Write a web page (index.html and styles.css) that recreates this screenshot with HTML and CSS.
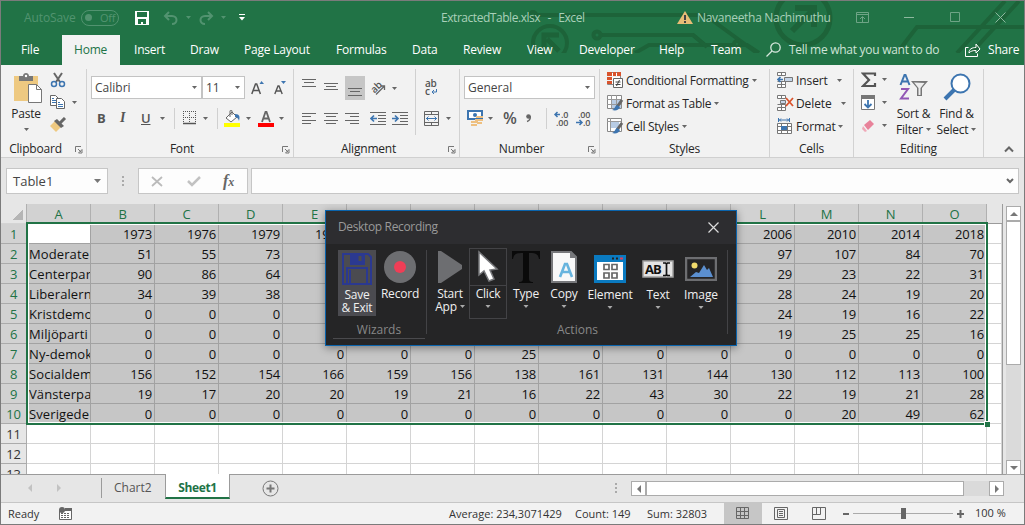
FILE: index.html
```html
<!DOCTYPE html>
<html lang="en">
<head>
<meta charset="utf-8">
<title>ExtractedTable.xlsx - Excel</title>
<link rel="stylesheet" href="styles.css">
</head>
<body>
<svg class="defs" width="0" height="0">
  <symbol id="caret" viewBox="0 0 5 3"><path d="M0 0h5L2.5 3z" fill="currentColor"/></symbol>
  <symbol id="launch" viewBox="0 0 8 8"><path d="M.5 6V.5H6M3 3l3 3M7 3.5V7H3.500z" fill="none" stroke="#777"/></symbol>
</svg>
<div class="window">
  <header class="top">
    <svg class="circuit" viewBox="0 0 1023 52" width="1023" height="52" fill="none" stroke="#1d6339" stroke-width="4">
      <circle cx="532" cy="14" r="3"/><path d="M535 14H704l52 38M600 34H692l12 10h28M634 52l14-8h56M740 44h6l12 8"/>
      <circle cx="596" cy="34" r="3.500"/><circle cx="736" cy="43" r="3"/><circle cx="549" cy="42" r="17"/>
      <path d="M558 50l-12-12M543 52V34h15" stroke-width="5"/>
      <circle cx="802" cy="17" r="27" stroke-width="5"/><path d="M791 30l20-20M794 7h19v19" stroke-width="6"/>
      <path d="M682 34h10l14 12M896 52l20-26h107M956 52l48-52M970 52l48-52"/>
    </svg>
    <div class="titlebar">
      <span class="autosave">AutoSave</span>
      <span class="toggle"><i></i>Off</span>
      <svg class="i-save" width="14" height="14"><path fill="#fff" fill-rule="evenodd" d="M0 0h14v14H0zM2 1h10v5H2zM3 8h8v5H8v-2H6v2H3z"/></svg>
      <svg width="16" height="14" fill="none" stroke="#529370" stroke-width="2"><path d="M6 1L2 5l4 4M2 5h7c6 0 6 8 0 8"/></svg>
      <svg class="caret dim" width="5" height="3"><use href="#caret"/></svg>
      <svg width="16" height="14" fill="none" stroke="#529370" stroke-width="2"><path d="M9 1l4 4-4 4M13 5H6c-6 0-6 8 0 8"/></svg>
      <svg class="caret dim" width="5" height="3"><use href="#caret"/></svg>
      <svg width="6" height="7"><path d="M0 .5h6" stroke="#fff"/><path d="M0 3h6L3 6.500z" fill="#fff"/></svg>
      <span class="doc">ExtractedTable.xlsx &nbsp;-&nbsp; Excel</span>
      <svg width="16" height="13"><path d="M8 0l8 13H0z" fill="#e8bd76"/><path d="M8 4v5M8 10v2" stroke="#444" stroke-width="2"/></svg>
      <span class="user">Navaneetha Nachimuthu</span>
      <svg width="13" height="11" fill="none" stroke="#6ea486"><path d="M.5.5h12v10H.5zM.5 2.500h12M6.500 10V5M4 7l2.500-2.500L9 7"/></svg>
      <svg width="10" height="11"><path d="M0 5.500h10" stroke="#8db89e"/></svg>
      <svg width="10" height="11"><path d="M.5.5h9v9h-9z" fill="none" stroke="#6ea486"/></svg>
      <svg width="11" height="11"><path d="M.5.5l10 10M10.500.5l-10 10" stroke="#8db89e"/></svg>
    </div>
    <nav class="tabs">
      <span class="file">File</span><span class="home">Home</span><span>Insert</span><span>Draw</span><span>Page Layout</span><span>Formulas</span><span>Data</span><span>Review</span><span>View</span><span>Developer</span><span>Help</span><span>Team</span>
      <svg width="16" height="16" fill="none" stroke="#d7e8de" stroke-width="1.300"><circle cx="9.500" cy="5.500" r="4.700"/><path d="M6 9L.5 14.500"/></svg>
      <span class="tell">Tell me what you want to do</span>
      <svg width="16" height="15" fill="none" stroke="#fff"><path d="M3.500 4.500h-3v9h12v-3M4 10c0-4 3-5.500 7-5.500V1l4 5-4 4V7.500C8 7.500 5.500 8 4 10z"/></svg>
      <span class="share">Share</span>
    </nav>
  </header>

  <section class="ribbon">
    <div class="group clipboard">
      <div class="body">
        <div class="paste">
          <svg width="28" height="30"><path d="M0 3h24v25H0z" fill="#eec981"/><path d="M5 8V3h4c0-4 6-4 6 0h4v5z" fill="#777"/><circle cx="12" cy="3" r="1.200" fill="#fff"/><path d="M14.500 11.500h8l5 5v13h-13z" fill="#fff" stroke="#777"/><path d="M22.500 11.500v5h5" fill="none" stroke="#777"/></svg>
          <span>Paste</span>
          <svg class="caret" width="5" height="3"><use href="#caret"/></svg>
        </div>
        <div class="clip-tools">
          <svg width="16" height="16" fill="none"><path d="M4 1l6 9M12 1l-6 9" stroke="#666" stroke-width="2"/><circle cx="4" cy="12" r="2.500" stroke="#3d75b0" stroke-width="1.500"/><circle cx="12" cy="12" r="2.500" stroke="#3d75b0" stroke-width="1.500"/></svg><i></i>
          <svg width="16" height="14"><g fill="#fff" stroke="#666"><path d="M.5.5h5l3 3v7h-8z"/><path d="M6.500 3.500h5l3 3v7h-8z"/></g><path d="M2 3.500h2M2 5.500h4M2 7.500h4M8 7.500h2M8 9.500h5M8 11.500h5" stroke="#3d75b0"/></svg>
          <svg class="caret" width="5" height="3"><use href="#caret"/></svg>
          <svg width="17" height="15"><path d="M5 4l6 6-5 5-6-6z" fill="#eec981"/><path d="M4 4l3-2 7 7-3 2z" fill="#666"/><path d="M10 6l5-5" stroke="#666" stroke-width="3"/></svg>
        </div>
      </div>
      <div class="label"><span>Clipboard</span><svg width="8" height="8"><use href="#launch"/></svg></div>
    </div>

    <div class="group font">
      <div class="body">
        <div class="row1">
          <span class="select">Calibri<svg class="caret" width="5" height="3"><use href="#caret"/></svg></span>
          <span class="select">11<svg class="caret" width="5" height="3"><use href="#caret"/></svg></span>
          <svg width="14" height="15"><path d="M.8 14L4.500 4h1.200l3.700 10M2 10.500h6" fill="none" stroke="#555" stroke-width="1.500"/><path d="M8.500 4L10.500 1l2.500 3z" fill="#3d75b0"/></svg>
          <svg width="13" height="15"><path d="M.8 14L4 6h1l3.200 8M2 11h5" fill="none" stroke="#555" stroke-width="1.400"/><path d="M7 1h5L9.500 4z" fill="#3d75b0"/></svg>
        </div>
        <div class="row2">
          <b>B</b><em>I</em><u>U</u><svg class="caret" width="5" height="3"><use href="#caret"/></svg><i class="sep"></i>
          <svg width="14" height="14" fill="none" stroke="#555"><path d="M0 .5h13M.5 0v12M6.500 0v12M12.500 0v12M0 6.500h13" stroke-dasharray="1 1"/><path d="M0 12.500h13" stroke-width="1.500"/></svg>
          <svg class="caret" width="5" height="3"><use href="#caret"/></svg><i class="sep"></i>
          <svg width="17" height="17"><path d="M0 13h16v4H0z" fill="#ff0"/><path d="M8 2l5 5-6 5-5-4z" fill="#fff" stroke="#666"/><path d="M6 7V1c0-1 2-1 2 0v4" fill="none" stroke="#666"/><path d="M11 4c5 0 5 3 4 7-1-3-2-4-4-4z" fill="#3d75b0"/></svg>
          <svg class="caret" width="5" height="3"><use href="#caret"/></svg>
          <svg width="16" height="17"><path d="M4 12L7.500 2h1L12 12M5 8.500h6" fill="none" stroke="#666" stroke-width="1.800"/><path d="M0 13h16v4H0z" fill="red"/></svg>
          <svg class="caret" width="5" height="3"><use href="#caret"/></svg>
        </div>
      </div>
      <div class="label"><span>Font</span><svg width="8" height="8"><use href="#launch"/></svg></div>
    </div>

    <div class="group align">
      <div class="body">
        <div class="align-grid">
          <svg width="14" height="24" stroke="#666"><path d="M0 3.500h14M2 6.500h10M0 10.500h14"/></svg>
          <svg width="14" height="24" stroke="#666"><path d="M0 7.500h14M2 10.500h10M0 13.500h14"/></svg>
          <span class="pressed"><svg width="14" height="24" stroke="#666"><path d="M0 12.500h14M2 15.500h10M0 19.500h14"/></svg></span>
          <svg width="18" height="16" class="open"><text x="1" y="11" transform="rotate(-45 6 8)" class="g-ab">ab</text><path d="M6 14.500l8-8M10.500 6h4v4" fill="none" stroke="#666" stroke-width="1.300"/></svg>
          <svg class="caret" width="5" height="3"><use href="#caret"/></svg>
          <svg width="14" height="12" stroke="#666"><path d="M0 .5h14M0 3.500h9M0 7.500h14M0 10.500h9"/></svg>
          <svg width="14" height="12" stroke="#666"><path d="M0 .5h14M2 3.500h10M0 7.500h14M2 10.500h10"/></svg>
          <svg width="14" height="12" stroke="#666"><path d="M0 .5h14M5 3.500h9M0 7.500h14M5 10.500h9"/></svg>
          <svg width="16" height="14" fill="none" stroke="#666"><path d="M0 .5h16M8 3.500h8M8 6.500h8M8 9.500h8M0 12.500h16"/><path d="M7 6.500H1M4 3.500l-3 3 3 3" stroke="#3d75b0" stroke-width="1.700"/></svg>
          <svg width="16" height="14" fill="none" stroke="#666"><path d="M0 .5h16M8 3.500h8M8 6.500h8M8 9.500h8M0 12.500h16"/><path d="M0 6.500h6M3 3.500l3 3-3 3" stroke="#3d75b0" stroke-width="1.700"/></svg>
        </div>
        <div class="wrap-tools">
          <svg width="15" height="18" class="open"><text x="1" y="8" class="g-wrap">ab</text><text x="1" y="16" class="g-wrap">c</text><path d="M12.500 10v3H8M10 11l-2 2 2 2" fill="none" stroke="#3d75b0"/></svg><i></i>
          <svg width="16" height="16" fill="none" stroke="#666"><path d="M.5.5h14v14H.5zM.5 3.500h14M.5 11.500h14M7.500 0v4M7.500 11v4"/><path d="M2 7.500h11M4.500 5.500l-2 2 2 2M10.500 5.500l2 2-2 2" stroke="#3d75b0"/></svg>
          <svg class="caret" width="5" height="3"><use href="#caret"/></svg>
        </div>
      </div>
      <div class="label"><span>Alignment</span><svg width="8" height="8"><use href="#launch"/></svg></div>
    </div>

    <div class="group number">
      <div class="body">
        <span class="select">General<svg class="caret" width="5" height="3"><use href="#caret"/></svg></span>
        <div class="row2">
          <svg width="17" height="16"><path d="M1 1h14v8H1z" fill="#fff" stroke="#3d75b0" stroke-width="2"/><circle cx="8" cy="5" r="2" fill="#3d75b0"/><path d="M9 7h7M8 10h8M4 12h7M4 15h6M10 13h5" stroke="#eec081" stroke-width="2.200"/></svg>
          <svg class="caret" width="5" height="3"><use href="#caret"/></svg>
          <span class="pct">%</span><svg width="6" height="9"><circle cx="2.500" cy="2.500" r="2.300" fill="#666"/><path d="M4 2c1 3-1 5-3 5.500" fill="none" stroke="#666" stroke-width="1.500"/></svg><i class="sep"></i>
          <svg width="15" height="15" class="open"><path d="M6 3.500H1M3.500 1L1 3.500 3.500 6" fill="none" stroke="#3d75b0" stroke-width="1.500"/><text x="7" y="7" class="g-dec">.0</text><text x="2" y="14.500" class="g-dec">.00</text></svg>
          <svg width="15" height="15" class="open"><text x="2" y="7" class="g-dec">.00</text><path d="M0 11.500h6M3.500 9L6 11.500 3.500 14" fill="none" stroke="#3d75b0" stroke-width="1.500"/><text x="7" y="14.500" class="g-dec">.0</text></svg>
        </div>
      </div>
      <div class="label"><span>Number</span><svg width="8" height="8"><use href="#launch"/></svg></div>
    </div>

    <div class="group styles">
      <div class="body list">
        <div><svg width="17" height="17"><path d="M.5.5h13v12H.5z" fill="#fff" stroke="#888"/><path d="M0 0h5v12H0zM6 0h3v4H6zM10 0h4v4h-4z" fill="#d9532c"/><path d="M0 4.500h13M0 8.500h6" stroke="#eee"/><path d="M6.500 6.500h9v9h-9z" fill="#fff" stroke="#666"/><path d="M8.500 10h5M8.500 12.500h5M12.500 8l-3 6" stroke="#444"/></svg><span>Conditional Formatting</span><svg class="caret" width="5" height="3"><use href="#caret"/></svg></div>
        <div><svg width="17" height="17"><path d="M.5.5h14v13H.5z" fill="#fff" stroke="#888"/><path d="M5 4h9v9H5z" fill="#b8cce4"/><path d="M0 4.500h14M0 9.500h14M4.500 0v13M9.500 0v13" stroke="#999"/><path d="M15 5l-5 7" stroke="#666" stroke-width="3"/><path d="M10 10l3 2c-1 3-4 4-8 3 3-1 3-4 5-5z" fill="#3d75b0"/></svg><span>Format as Table</span><svg class="caret" width="5" height="3"><use href="#caret"/></svg></div>
        <div><svg width="17" height="17"><path d="M.5.5h14v13H.5z" fill="#fff" stroke="#888"/><path d="M4 4h8v6H4z" fill="#b8cce4"/><path d="M0 3.500h14M3.500 0v13" stroke="#999"/><path d="M15 5l-5 7" stroke="#666" stroke-width="3"/><path d="M10 10l3 2c-1 3-4 4-8 3 3-1 3-4 5-5z" fill="#3d75b0"/></svg><span>Cell Styles</span><svg class="caret" width="5" height="3"><use href="#caret"/></svg></div>
      </div>
      <div class="label"><span>Styles</span></div>
    </div>

    <div class="group cells">
      <div class="body list">
        <div><svg width="17" height="17" fill="#fff" stroke="#777"><path d="M.5.5h8v3h-8zM4.500.5v3M.5 12.500h8v3h-8zM4.500 9.500v6M.5 9.500h8v3"/><path d="M7.500 5.500h8v4h-8z" fill="#c5d5e8"/><path d="M6 7.500H1M3.500 5L1 7.500 3.500 10" stroke="#3d75b0" stroke-width="1.700" fill="none"/></svg><span>Insert</span><svg class="caret" width="5" height="3"><use href="#caret"/></svg></div>
        <div><svg width="17" height="17" fill="#fff" stroke="#777"><path d="M.5.5h8v3h-8zM4.500.5v3M.5 12.500h8v3h-8zM4.500 9.500v6M.5 9.500h8v3"/><path d="M3.500 5.500h5v3h-5z" fill="#c5d5e8"/><path d="M9 3l7 8M16 3l-7 8" stroke="#d9532c" stroke-width="1.800"/></svg><span>Delete</span><svg class="caret" width="5" height="3"><use href="#caret"/></svg></div>
        <div><svg width="17" height="17" fill="none" stroke="#777"><path d="M.5 5.500h14v10H.5zM.5 8.500h14M.5 12.500h14M4.500 5v11M10.500 5v11" fill="#fff"/><path d="M4 8h6v4H4z" fill="#3d75b0" stroke="none"/><path d="M1.500 0v4M12.500 0v4M2 2h10M4 .5L2.500 2 4 3.500M10 .5L11.500 2 10 3.500" stroke="#3d75b0"/></svg><span>Format</span><svg class="caret" width="5" height="3"><use href="#caret"/></svg></div>
      </div>
      <div class="label"><span>Cells</span></div>
    </div>

    <div class="group editing">
      <div class="body">
        <div class="edit-tools">
          <svg width="16" height="16"><path d="M14 4V1.500H2L8 8l-6 6h12v-3" fill="none" stroke="#555" stroke-width="2.200"/></svg><svg class="caret" width="5" height="3"><use href="#caret"/></svg>
          <svg width="15" height="16"><path d="M.5.5h13v14H.5z" fill="#fff" stroke="#777"/><path d="M0 0h14v4H0z" fill="#777"/><path d="M7 5v8M3.500 9L7 12.500 10.500 9" fill="none" stroke="#3d75b0" stroke-width="1.800"/></svg><svg class="caret" width="5" height="3"><use href="#caret"/></svg>
          <svg width="15" height="14"><path d="M3 6l6-5 4 4-6 6z" fill="#e8829a"/><path d="M2 7l4 5-2 1-3-3z" fill="#f0a9b8"/></svg><svg class="caret" width="5" height="3"><use href="#caret"/></svg>
        </div>
        <div class="big">
          <svg width="30" height="29"><path d="M1.500 12L5.500 2h1l4 10M3 8.500h6" fill="none" stroke="#3d75b0" stroke-width="2"/><path d="M2 16h7L2 25.500h8" fill="none" stroke="#9257b5" stroke-width="2"/><path d="M12 8h17l-6 7v8h-5v-8z" fill="#777"/><path d="M15 9.500l4.500 5.500v7h2v-7l4-5" fill="#eee"/></svg>
          <span>Sort &amp;<br>Filter<svg class="caret" width="5" height="3"><use href="#caret"/></svg></span>
        </div>
        <div class="big">
          <svg width="28" height="29"><path d="M12 16L2 26" stroke="#3d75b0" stroke-width="4"/><circle cx="17.500" cy="10.500" r="9" fill="#fff" stroke="#3d75b0" stroke-width="2"/></svg>
          <span>Find &amp;<br>Select<svg class="caret" width="5" height="3"><use href="#caret"/></svg></span>
        </div>
      </div>
      <div class="label"><span>Editing</span></div>
    </div>
    <svg class="collapse" width="10" height="7"><path d="M1 5.500l4-4 4 4" fill="none" stroke="#666" stroke-width="2"/></svg>
  </section>

  <section class="formula">
    <div class="namebox">Table1<svg width="7" height="4"><path d="M0 0h7L3.500 4z" fill="#777"/></svg></div>
    <svg class="dots" width="2" height="11"><path d="M0 0h2v2H0zM0 4h2v2H0zM0 8h2v2H0z" fill="#aaa"/></svg>
    <div class="fx">
      <svg width="12" height="11"><path d="M1 1l10 9M11 1L1 10" stroke="#bbb" stroke-width="1.800"/></svg>
      <svg width="14" height="11"><path d="M1 5l4 4 8-8" fill="none" stroke="#c2c2c2" stroke-width="2.500"/></svg>
      <span>f<small>x</small></span>
    </div>
    <div class="input"><svg width="8" height="6"><path d="M1 1l3 3 3-3" fill="none" stroke="#666" stroke-width="2"/></svg></div>
  </section>

  <section class="sheet">
    <div class="grid" id="grid"></div>
    <div class="vscroll">
      <span class="btn"><svg width="8" height="4"><path d="M0 4h8L4 0z" fill="#777"/></svg></span>
      <span class="vthumb"></span><span class="fill"></span>
      <span class="btn"><svg width="8" height="4"><path d="M0 0h8L4 4z" fill="#777"/></svg></span>
    </div>
    <div class="selection"><i></i></div>
  </section>

  <section class="sheettabs">
    <svg width="4" height="8"><path d="M4 0v8L0 4z" fill="#c2c2c2"/></svg>
    <svg width="4" height="8"><path d="M0 0v8l4-4z" fill="#c2c2c2"/></svg>
    <i class="divider"></i>
    <span class="chart">Chart2</span>
    <span class="active">Sheet1</span>
    <svg class="plus" width="17" height="17" fill="none" stroke="#777"><circle cx="8.500" cy="8.500" r="7.500"/><path d="M4.500 8.500h8M8.500 4.500v8" stroke-width="2"/></svg>
    <svg class="dots" width="2" height="11"><path d="M0 0h2v2H0zM0 4h2v2H0zM0 8h2v2H0z" fill="#aaa"/></svg>
    <div class="hscroll">
      <span class="btn"><svg width="4" height="8"><path d="M4 0v8L0 4z" fill="#777"/></svg></span>
      <span class="hthumb"></span><span class="fill"></span>
      <span class="btn"><svg width="4" height="8"><path d="M0 0v8l4-4z" fill="#777"/></svg></span>
    </div>
  </section>

  <footer class="status">
    <span>Ready</span>
    <svg width="13" height="13"><path d="M.5 3.500h12v9H.5z" fill="#fff" stroke="#666"/><path d="M6 1h7v3H6z" fill="#666"/><path d="M2 6.500h9M2 8.500h9M2 10.500h9" stroke="#666" stroke-dasharray="2 1"/><circle cx="3" cy="3" r="3" fill="#666"/></svg>
    <span>Average: 234,3071429</span><span>Count: 149</span><span>Sum: 32803</span>
    <span class="view on"><svg width="14" height="13" fill="none" stroke="#666"><path d="M.5.5h12v11H.5zM.5 4.500h12M.5 8.500h12M4.500 0v12M8.500 0v12"/></svg></span>
    <span class="view"><svg width="14" height="13" fill="none" stroke="#666"><path d="M.5.5h13v12H.5zM3.500 2.500h7v8h-7zM5 4.500h4M5 6.500h4M5 8.500h4"/></svg></span>
    <span class="view"><svg width="14" height="13" fill="none" stroke="#666"><path d="M.5.5h13v12H.5zM.5 7.500h8v-7M4.500.5v7"/></svg></span>
    <svg width="6" height="2"><path d="M0 0h6v2H0z" fill="#666"/></svg>
    <span class="slider"><i></i></span>
    <svg width="8" height="8"><path d="M0 4h7M3.500 0v8" stroke="#666" stroke-width="2"/></svg>
    <span class="zoom">100 %</span>
  </footer>

  <aside class="dialog">
    <div class="dlg-title"><span>Desktop Recording</span><svg width="11" height="11"><path d="M.5.5l10 10M10.500.5l-10 10" stroke="#ddd" stroke-width="1.200"/></svg></div>
    <div class="dlg-body">
      <div class="wizards">
        <div class="tools">
          <div class="tool save"><svg width="30" height="32" fill="none" stroke="#2b3990" stroke-width="2"><path d="M3 1h23l3 3v27H1V1z"/><path d="M5 31V15h20v16M8 31V17"/><path d="M9 1h13v10H9z" fill="#2b3990"/><path d="M18 3v5" stroke="#4b4b50" stroke-width="3"/></svg><span>Save<br>&amp; Exit</span></div>
          <div class="tool record"><svg width="32" height="32"><circle cx="16" cy="16" r="16" fill="#6d6e71"/><circle cx="16" cy="16" r="6" fill="#ef3e56"/></svg><span>Record</span></div>
        </div>
        <div class="caption">Wizards</div>
      </div>
      <div class="actions">
        <div class="tools">
          <div class="tool start"><svg width="24" height="32"><path d="M0 0l3 0 21 14v4L3 32H0z" fill="#6d6e71"/></svg><span>Start<br>App<svg class="caret" width="5" height="3"><use href="#caret"/></svg></span></div>
          <div class="tool click"><svg width="24" height="36"><path d="M3 3v23l5-4 5 10 5-2-4-9 7-1z" fill="#fff" stroke="#77787b" stroke-width="1.500"/></svg><span>Click</span><svg class="caret" width="6" height="3"><use href="#caret"/></svg></div>
          <div class="tool type"><svg width="28" height="32"><path d="M0 0h28v8h-1c-1-5-3-6-10-6v25c0 3 1 4 4 4v1H7v-1c3 0 4-1 4-4V2C4 2 2 3 1 8H0z" fill="#0a0a0a"/></svg><span>Type</span><svg class="caret" width="6" height="3"><use href="#caret"/></svg></div>
          <div class="tool copy"><svg width="26" height="32"><path d="M1 1h19l5 5v25H1z" fill="#f8f8f8" stroke="#77787b" stroke-width="2"/><path d="M19 0v7h7z" fill="#77787b"/><path d="M9 26l5-13h2l5 13M11 21h9" fill="none" stroke="#67b4de" stroke-width="2.600"/></svg><span>Copy</span><svg class="caret" width="6" height="3"><use href="#caret"/></svg></div>
          <div class="tool element"><svg width="32" height="28"><path d="M0 0h32v28H0z" fill="#0a7ac0"/><path d="M3 7h26v18H3z" fill="#fff"/><path d="M10 9.500h5v5h-5zM18 9.500h5v5h-5zM10 18h5v5h-5zM18 18h5v5h-5z" fill="none" stroke="#666" stroke-width="1.700"/><path d="M18 2.500h2v2h-2zM22 2.500h2v2h-2z" fill="#222"/><path d="M26 2.500h3v2h-3z" fill="#e0405a"/></svg><span>Element</span><svg class="caret" width="6" height="3"><use href="#caret"/></svg></div>
          <div class="tool text"><svg width="32" height="18"><path d="M1 1h30v16H1z" fill="#e4e4e4" stroke="#a0a0a0" stroke-width="1.500"/><text x="3" y="13.500" class="g-abi">AB</text><path d="M21 3h2.500l1 1 1-1H28M24.500 4v11M21 15.500h2.500l1-1 1 1H28" fill="none" stroke="#111" stroke-width="1.700"/></svg><span>Text</span><svg class="caret" width="6" height="3"><use href="#caret"/></svg></div>
          <div class="tool image"><svg width="32" height="24"><path d="M1 1h30v22H1z" fill="#242426" stroke="#6d6e71" stroke-width="2.500"/><circle cx="9.500" cy="8.500" r="3" fill="#f0da6c"/><path d="M5 20l6-5 3 1 5-8 3 5 2-2 4 9z" fill="#5b8fd0"/></svg><span>Image</span><svg class="caret" width="6" height="3"><use href="#caret"/></svg></div>
        </div>
        <div class="caption">Actions</div>
      </div>
    </div>
  </aside>
</div>
<script src="script.js"></script>
</body>
</html>
```

FILE: styles.css
```css
* { box-sizing: border-box; }
body { margin: 0; font: 12px/16px "Open Sans", sans-serif; letter-spacing: -0.2px; color: #333; overflow: hidden; }
svg { display: block; flex: none; }
.open { overflow: visible; }
.defs { position: absolute; }
.window { position: relative; display: flex; flex-direction: column; width: 1025px; height: 525px; border: 1px solid #7b7b7b; background: #e6e6e6; }
.caret { color: #666; }
.sep { width: 1px; height: 21px; background: #d0d0d0; }

.top { position: relative; height: 64px; background: #217346; }
.circuit { position: absolute; top: 0; left: 0; }
.titlebar, .tabs { position: relative; display: grid; align-items: center; white-space: nowrap; }
.titlebar { height: 34px; grid-template-columns: 57px 54px 28px 23px 13px 22px 18px 202px 236px 20px 159px 48px 46px 45px 30px; padding-left: 23px; padding-bottom: 1px; }
.titlebar .dim { color: #529370; }
.autosave { color: #529370; letter-spacing: -0.1px; }
.toggle { display: flex; align-items: center; width: 38px; height: 16px; border: 1px solid #529370; border-radius: 8px; padding-left: 3px; gap: 8px; color: #529370; font-size: 11px; }
.toggle i { width: 7px; height: 7px; border-radius: 50%; background: #529370; }
.doc, .user { color: #a9d0b9; }
.doc { letter-spacing: -0.45px; word-spacing: 1px; font-size: 12px; }
.user { letter-spacing: -0.3px; }
.tabs { height: 30px; color: #fff; grid-template-columns: 61px 72px 56px 54px 92px 76px 51px 64px 52px 80px 52px 55px 23px 176px 23px 35px; }
.file { padding-left: 20px; }
.home { width: 58px; height: 30px; padding: 7px 0 0 12px; background: #f2f2f2; color: #217346; }
.tell { color: #cfe4d8; letter-spacing: -0.28px; }

.ribbon { display: flex; height: 93px; padding: 0; background: #f2f2f2; border-bottom: 1px solid #d0d0d0; color: #262626; }
.group { display: flex; flex-direction: column; height: 88px; margin-top: 4px; border-right: 1px solid #d2d2d2; }
.body { display: flex; height: 72px; }
.label { display: flex; justify-content: center; position: relative; height: 16px; }
.label svg { position: absolute; right: 3px; top: 5px; }
.clipboard { width: 86px; } .font { width: 207px; } .align { width: 166px; } .number { width: 140px; } .styles { width: 170px; } .cells { width: 84px; } .editing { width: 130px; }
.clipboard .label { padding-right: 16px; } .font .label { padding-right: 16px; } .align .label { padding-right: 16px; }
.number .label { padding-right: 16px; }
.paste { display: flex; flex-direction: column; align-items: center; width: 49px; padding: 4px 0 0 5px; }
.paste span { margin: 3px 4px 0 0; }
.paste .caret { margin: 6px 4px 0 0; }
.clip-tools { display: grid; grid-template-columns: 22px 8px; grid-template-rows: 22px 22px 23px; align-items: center; }
.font .body, .number .body { flex-direction: column; }
.row1 { display: grid; grid-template-columns: 111px 49px 23px 20px; margin: 7px 0 0 4px; align-items: center; }
.select { display: flex; align-items: center; justify-content: space-between; height: 23px; padding: 0 4px 0 3px; background: #fff; border: 1px solid #c3c3c3; color: #444; letter-spacing: 0; }
.row1 .select + .select { width: 43px; }
.row2 { display: grid; align-items: center; height: 24px; margin-top: 7px; color: #555; }
.font .row2 { grid-template-columns: 23px 21px 19px 14px 9px 20px 14px 7px 22px 12px 21px 8px; padding-left: 10px; }
.row2 b { font-size: 13px; }
.row2 em { font: italic bold 14px "Liberation Serif", serif; }
.row2 u { font-weight: 600; font-size: 13px; }
.align-grid { display: grid; grid-template-columns: 22px 21px 25px 22px 24px; grid-template-rows: 24px 37px; padding: 7px 0 0 8px; align-items: center; align-content: start; width: 122px; border-right: 1px solid #d0d0d0; height: 66px; }
.pressed { width: 20px; height: 24px; padding-left: 3px; background: #c6c6c6; }
.wrap-tools { display: grid; grid-template-columns: 22px 8px; grid-template-rows: 24px 37px; padding: 7px 0 0 8px; align-items: center; align-content: start; }
.g-ab { font: 600 10px "Open Sans", sans-serif; fill: #555; }
.g-wrap { font: 600 10px "Open Sans", sans-serif; fill: #555; }
.g-dec { font: 600 9px "Open Sans", sans-serif; fill: #555; }
.g-abi { font: 700 13px "Open Sans", sans-serif; fill: #111; letter-spacing: -1px; }
.number .select { width: 131px; margin: 7px 0 0 4px; }
.number .row2 { grid-template-columns: 21px 15px 23px 20px 8px 22px 16px; padding-left: 7px; }
.pct { font-size: 16px; font-weight: 600; }
.list { flex-direction: column; padding-left: 7px; }
.list div { display: flex; align-items: center; height: 23px; }
.list span { margin: 0 3px 0 2px; letter-spacing: -0.28px; }
.cells .list span { min-width: 38px; letter-spacing: -0.1px; }
.cells .list div:nth-child(2) span { min-width: 42px; }
.cells .list div:nth-child(3) span { margin-right: 2px; }
.editing .edit-tools { display: grid; grid-template-columns: 21px 19px; grid-template-rows: 21px 25px 21px; align-items: center; padding-left: 7px; width: 38px; }
.big { display: flex; flex-direction: column; align-items: center; width: 43px; padding-top: 4px; text-align: center; white-space: nowrap; }
.big span { margin-top: 4px; }
.big .caret { display: inline-block; margin: 0 0 3px 3px; }
.collapse { margin: 81px 0 0 20px; }

.formula { display: flex; align-items: flex-start; height: 46px; padding: 10px 0 0 5px; }
.formula > div { display: flex; align-items: center; height: 26px; background: #fdfdfd; border: 1px solid #c6c6c6; }
.namebox { width: 102px; justify-content: space-between; padding: 0 6px; font-size: 13px; letter-spacing: 0; color: #444; }
.formula .dots { margin: 8px 14px 0 14px; }
.fx { width: 110px; margin-right: 3px; padding-left: 12px; gap: 24px; }
.fx span { margin-left: -2px; font: italic bold 16px "Liberation Serif", serif; color: #666; }
.fx small { font-size: 12px; }
.input { width: 768px; justify-content: flex-end; padding-right: 4px; }

.sheet { position: relative; display: flex; height: 271px; border-bottom: 1px solid #9b9b9b; }
.grid { display: grid; grid-template-columns: 26px repeat(15, 64px) 15px; grid-template-rows: 20px; grid-auto-rows: 20px; width: 1002px; border-right: 1px solid #9b9b9b; background: #fff; overflow: hidden; font-size: 13px; line-height: 20px; color: #111; }
.grid span { border-right: 1px solid #d4d4d4; border-bottom: 1px solid #d4d4d4; padding-right: 2px; text-align: right; overflow: hidden; white-space: nowrap; }
.grid .name { text-align: left; padding: 0 0 0 2px; letter-spacing: 0.1px; }
.grid .picked { background: #c6c6c6; border-color: #a2a2a2; }
.grid .origin { background: #fff; }
.grid .colhead { background: #d2d2d2; color: #217346; text-align: center; padding: 0; border-color: #b0b0b0; line-height: 20px; }
.grid .rowhead { background: #d2d2d2; color: #217346; text-align: center; padding: 0; border-color: #ababab; }
.grid .plain { background: #e6e6e6; color: #333; }
.grid .corner { background: linear-gradient(135deg, #e6e6e6 50%, #b5b5b5 50%) 11px 5px / 11px 11px no-repeat #e6e6e6; border-right-color: #b0b0b0; }
.grid .topfill { background: #e6e6e6; border-color: #9b9b9b; border-right: 0; }
.selection { position: absolute; left: 25px; top: 18px; width: 962px; height: 203px; border: 2px solid #217346; outline: 1px solid #fff; outline-offset: -3px; }
.selection i { position: absolute; right: -4px; bottom: -4px; width: 6px; height: 6px; background: #217346; border-top: 1px solid #fff; border-left: 1px solid #fff; }
.vscroll { display: flex; flex-direction: column; width: 15px; margin: 2px 0 0 3px; height: 269px; background: #dadada; }
.btn { display: flex; align-items: center; justify-content: center; width: 15px; height: 15px; background: #fff; border: 1px solid #ababab; }
.vthumb { height: 144px; background: #fff; border: 1px solid #ababab; }
.fill { flex: 1; }

.sheettabs { display: flex; align-items: flex-start; height: 27px; padding-left: 27px; }
.sheettabs > svg { margin-top: 9px; }
.sheettabs svg + svg { margin-left: 25px; }
.divider { width: 1px; height: 20px; margin: 3px 0 0 40px; background: #9b9b9b; }
.chart { width: 63px; padding: 5px 0 0 12px; color: #555; letter-spacing: 0; }
.active { position: relative; width: 65px; height: 25px; margin-top: -1px; padding-top: 6px; background: #fff; border: 1px solid #9b9b9b; border-top: 0; border-bottom: 2px solid #217346; text-align: center; font-weight: 700; color: #217346; letter-spacing: -0.4px; }
.sheettabs .plus { margin: 5px 0 0 32px; }
.sheettabs .dots { margin: 8px 0 0 336px; }
.hscroll { display: flex; width: 373px; height: 15px; margin: 6px 0 0 14px; background: #dadada; }
.hthumb { width: 318px; background: #fff; border: 1px solid #ababab; }

.status { display: grid; align-items: center; height: 22px; padding-left: 7px; background: #f2f2f2; border-top: 1px solid #c6c6c6; grid-template-columns: 51px 390px 126px 72px 77px 38px 38px 43px 10px 104px 18px 40px; font-size: 11px; white-space: nowrap; letter-spacing: 0; }
.view { display: flex; align-items: center; justify-content: center; height: 21px; width: 38px; }
.on { background: #c6c6c6; }
.slider { display: flex; justify-content: center; align-items: center; width: 100px; height: 11px; background: linear-gradient(#aaa, #aaa) 0 50% / 100% 1px no-repeat; }
.slider i { width: 5px; height: 11px; background: #666; }
.zoom { padding-bottom: 2px; }

.dialog { position: absolute; left: 324px; top: 209px; width: 412px; height: 136px; border: 1px solid #0a64ad; background: #252526; color: #f0f0f0; box-shadow: 0 2px 8px rgba(0,0,0,.4); }
.dlg-title { display: flex; justify-content: space-between; align-items: center; height: 33px; padding: 0 17px 1px 12px; background: #2d2d30; color: #999; letter-spacing: -0.35px; }
.dlg-body { display: flex; padding-top: 6px; }
.wizards { width: 101px; height: 88px; background: linear-gradient(#434346, #434346) 100% 0 / 1px 84px no-repeat; padding-left: 7px; }
.tools { display: flex; height: 71px; }
.actions { width: 301px; background: linear-gradient(#434346, #434346) 100% 0 / 1px 84px no-repeat; }
.tool { display: flex; flex-direction: column; align-items: center; text-align: center; line-height: 13px; white-space: nowrap; }
.tool > span { margin-top: 4px; }
.tool .caret { color: #aaa; margin-top: 5px; }
.tool span .caret { display: inline-block; margin: 0 0 3px 3px; }
.save { width: 38px; height: 66px; margin-left: 5px; padding-top: 3px; background: #4b4b50; }
.save > span { margin-top: 3px; }
.record { width: 48px; padding-top: 1px; }
.start { width: 42px; padding: 1px 0 0 4px; }
.click { width: 38px; height: 71px; margin-top: -2px; border: 1px solid #434346; background: linear-gradient(#434346, #434346) 0 36px / 100% 1px no-repeat; }
.click > span { margin-top: 2px; }
.type { width: 38px; padding-top: 1px; }
.copy { width: 38px; padding-top: 1px; }
.element { width: 54px; padding-top: 5px; }
.element > span, .image > span { letter-spacing: -0.1px; }
.text { width: 42px; padding-top: 10px; }
.text > span { margin-top: 10px; }
.image { width: 44px; padding-top: 7px; }
.image > span { margin-top: 7px; }
.element > span { margin-top: 5px; }
.caption { color: #888; text-align: center; letter-spacing: 0; line-height: 18px; }
.wizards .caption { width: 92px; height: 18px; border-bottom: 1px solid #4a4a4d; }
```

FILE: script.js
```js
const columns = "ABCDEFGHIJKLMNO".split("");
const rows = [
  ["", 1973, 1976, 1979, "19", , , , , , , 2006, 2010, 2014, 2018],
  ["Moderate", 51, 55, 73, , , , , , , , 97, 107, 84, 70],
  ["Centerpar", 90, 86, 64, , , , , , , , 29, 23, 22, 31],
  ["Liberalern", 34, 39, 38, , , , , , , , 28, 24, 19, 20],
  ["Kristdemo", 0, 0, 0, , , , , , , , 24, 19, 16, 22],
  ["Miljöparti", 0, 0, 0, , , , , , , , 19, 25, 25, 16],
  ["Ny-demok", 0, 0, 0, 0, 0, 0, 25, 0, 0, 0, 0, 0, 0, 0],
  ["Socialdem", 156, 152, 154, 166, 159, 156, 138, 161, 131, 144, 130, 112, 113, 100],
  ["Vänsterpa", 19, 17, 20, 20, 19, 21, 16, 22, 43, 30, 22, 19, 21, 28],
  ["Sverigede", 0, 0, 0, 0, 0, 0, 0, 0, 0, 0, 0, 20, 49, 62]
];
const grid = document.getElementById("grid");

function cell(text, className) {
  const el = document.createElement("span");
  el.className = className;
  el.textContent = text === undefined ? "" : text;
  grid.appendChild(el);
  return el;
}

cell("", "corner");
columns.forEach(c => cell(c, "colhead"));
cell("", "topfill");
for (let r = 0; r < 13; r++) {
  const data = rows[r];
  cell(r + 1, data ? "rowhead" : "rowhead plain");
  columns.forEach((_, c) => {
    if (!data) cell("", "");
    else if (r === 0 && c === 4) cell("1982", "picked");
    else cell(data[c], c === 0 ? (r === 0 ? "picked origin" : "picked name") : "picked");
  });
  cell("", "");
}
```
